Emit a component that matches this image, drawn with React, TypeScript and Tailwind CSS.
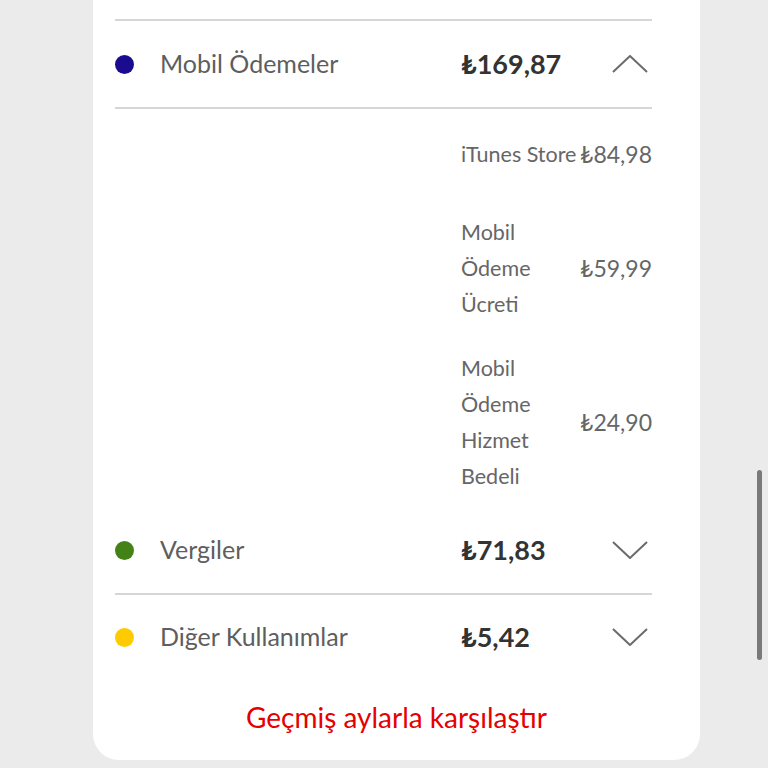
type SubItem = { lines: string[]; price: string; mt: string };

const subItems: SubItem[] = [
    { lines: ['iTunes Store'], price: '₺84,98', mt: 'mt-[27px]' },
    { lines: ['Mobil', 'Ödeme', 'Ücreti'], price: '₺59,99', mt: 'mt-[42px]' },
    { lines: ['Mobil', 'Ödeme', 'Hizmet', 'Bedeli'], price: '₺24,90', mt: 'mt-[28px]' },
];

function Divider() {
    return <div className="h-[2px] w-full bg-[#d6d6d6]" />;
}

function Chevron({ up }: { up?: boolean }) {
    return (
        <svg width="36" height="18" viewBox="0 0 36 18" className="text-[#6b6b6b]">
            <polyline
                points={up ? '1,17 18,1 35,17' : '1,1 18,17 35,1'}
                fill="none"
                stroke="currentColor"
                strokeWidth="2"
            />
        </svg>
    );
}

function CategoryRow({
    dot,
    label,
    amount,
    open,
    height,
}: {
    dot: string;
    label: string;
    amount: string;
    open?: boolean;
    height: string;
}) {
    return (
        <div className={`flex items-center ${height}`}>
            <span className={`block w-[19px] h-[19px] rounded-full ${dot}`} />
            <span className="ml-[26px] w-[301px] text-[25px] text-[#5e5e5e]">{label}</span>
            <span className="w-[151px] text-[27px] font-bold text-[#333333]">{amount}</span>
            <Chevron up={open} />
        </div>
    );
}

export default function App() {
    return (
        <div
            className="w-[768px] h-[768px] bg-[#ebebeb] overflow-hidden relative"
            style={{ fontFamily: 'Lato, "Noto Sans", "DejaVu Sans", sans-serif' }}
        >
            <div className="ml-[93px] w-[607px] h-[760px] bg-white rounded-b-[26px] pt-[19px] pl-[22px] pr-[48px]">
                <Divider />
                <CategoryRow dot="bg-[#1b0b8f]" label="Mobil Ödemeler" amount="₺169,87" open height="h-[86px]" />
                <Divider />

                {/* Sub items */}
                <div className="flex flex-col items-end">
                    {subItems.map((item) => (
                        <div key={item.price} className={`flex items-center justify-between w-[191px] ${item.mt}`}>
                            <div className="flex flex-col text-[21.5px] leading-[36px] text-[#666666]">
                                {item.lines.map((l) => (
                                    <span key={l} className="whitespace-nowrap">
                                        {l}
                                    </span>
                                ))}
                            </div>
                            <span className="text-[23px] text-[#666666]">{item.price}</span>
                        </div>
                    ))}
                </div>

                <div className="mt-[13px]">
                    <CategoryRow dot="bg-[#428216]" label="Vergiler" amount="₺71,83" height="h-[86px]" />
                </div>
                <Divider />
                <CategoryRow dot="bg-[#fecb00]" label="Diğer Kullanımlar" amount="₺5,42" height="h-[84px]" />

                <div className="flex justify-center -ml-[22px] -mr-[48px] mt-[20px]">
                    <span className="text-[28px] leading-[36px] text-[#e60000]">Geçmiş aylarla karşılaştır</span>
                </div>
            </div>

            {/* Scrollbar */}
            <div className="absolute left-[757px] top-[470px] w-[5px] h-[190px] rounded-full bg-[#7a7a7a]" />
        </div>
    );
}
